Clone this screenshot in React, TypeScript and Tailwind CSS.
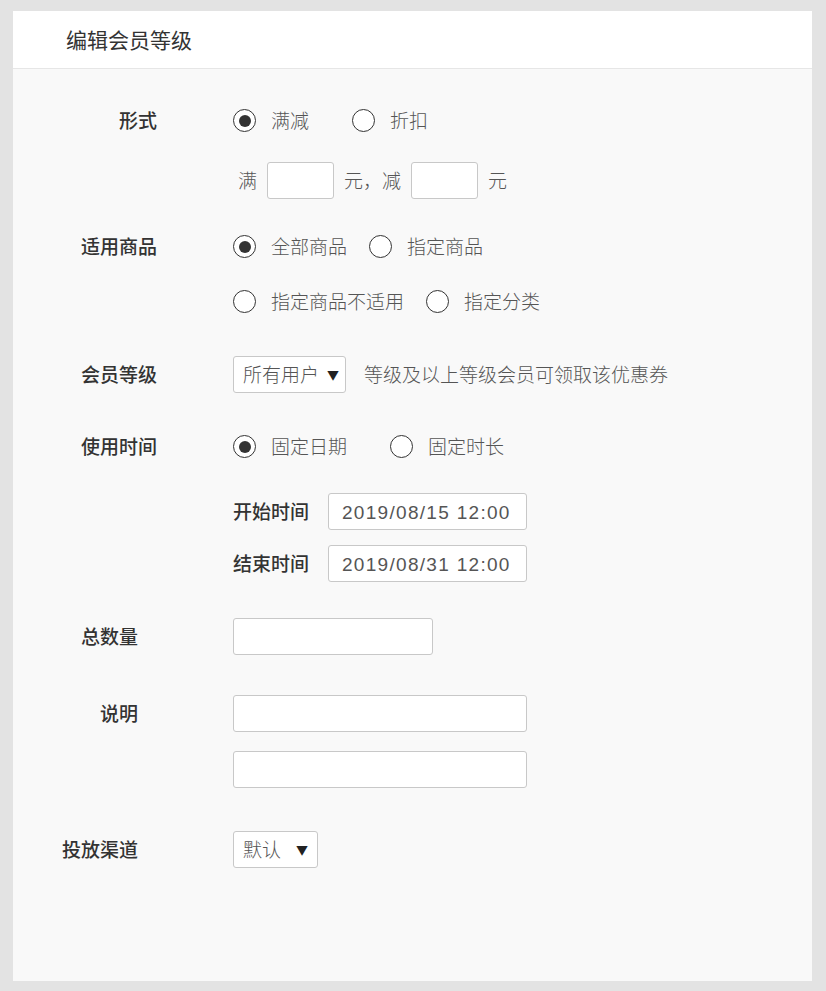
const font = { fontFamily: '"Noto Sans CJK SC", "Noto Sans", sans-serif' };

function Radio({ checked, label, className = "" }: { checked?: boolean; label: string; className?: string }) {
  return (
    <div className={`flex items-center ${className}`}>
      <span className="flex h-[23px] w-[23px] items-center justify-center rounded-full border-[1.5px] border-[#333] bg-white">
        {checked && <span className="h-[12px] w-[12px] rounded-full bg-[#333]" />}
      </span>
      <span className="ml-[15px] whitespace-nowrap text-[19px] font-light text-[#555]">{label}</span>
    </div>
  );
}

function Row({ label, wide, mt, children }: { label?: string; wide?: boolean; mt: string; children?: React.ReactNode }) {
  return (
    <div className={`flex h-[37px] items-center ${mt}`}>
      <div className={`w-[220px] shrink-0 text-right text-[19px] font-medium text-[#333] ${wide ? "pr-[76px]" : "pr-[95px]"}`}>
        {label}
      </div>
      {children}
    </div>
  );
}

const box = "rounded-[3px] border border-[#c8c8c8] bg-white";
const digits = { fontFamily: '"Liberation Sans", Arial, sans-serif' };

export default function App() {
  return (
    <div className="min-h-screen bg-[#e3e3e3] pb-[10px] pl-[13px] pr-[14px] pt-[11px]" style={font}>
      <div className="flex h-[970px] flex-col bg-[#f9f9f9]">
        <div className="flex h-[58px] items-center border-b border-[#e6e6e6] bg-white pl-[53px]">
          <h1 className="text-[21px] text-[#333]">编辑会员等级</h1>
        </div>

        <Row label="形式" wide mt="mt-[33px]">
          <Radio checked label="满减" />
          <Radio label="折扣" className="ml-[43px]" />
        </Row>

        <Row mt="mt-[23px]">
          <div className="flex items-center whitespace-nowrap text-[19px] font-light text-[#555]">
            <span className="ml-[5px]">满</span>
            <div className={`ml-[10px] h-[37px] w-[67px] ${box}`} />
            <span className="ml-[10px]">元，减</span>
            <div className={`ml-[10px] h-[37px] w-[67px] ${box}`} />
            <span className="ml-[10px]">元</span>
          </div>
        </Row>

        <Row label="适用商品" wide mt="mt-[29px]">
          <Radio checked label="全部商品" />
          <Radio label="指定商品" className="ml-[22px]" />
        </Row>

        <Row mt="mt-[18px]">
          <Radio label="指定商品不适用" />
          <Radio label="指定分类" className="ml-[22px]" />
        </Row>

        <Row label="会员等级" wide mt="mt-[36px]">
          <div className={`flex h-[37px] w-[113px] shrink-0 items-center whitespace-nowrap pl-[9px] text-[19px] font-light text-[#555] ${box}`}>
            所有用户
            <span className="ml-[8px] text-[12px] text-[#222]">▼</span>
          </div>
          <span className="ml-[18px] whitespace-nowrap text-[19px] font-light text-[#555]">等级及以上等级会员可领取该优惠券</span>
        </Row>

        <Row label="使用时间" wide mt="mt-[35px]">
          <Radio checked label="固定日期" />
          <Radio label="固定时长" className="ml-[43px]" />
        </Row>

        <Row mt="mt-[28px]">
          <span className="w-[95px] text-[19px] font-medium text-[#333]">开始时间</span>
          <div
            className={`flex h-[37px] w-[199px] items-center whitespace-nowrap pl-[13px] pt-[3px] text-[19px] tracking-[1.3px] text-[#555] ${box}`}
            style={digits}
          >
            2019/08/15 12:00
          </div>
        </Row>

        <Row mt="mt-[15px]">
          <span className="w-[95px] text-[19px] font-medium text-[#333]">结束时间</span>
          <div
            className={`flex h-[37px] w-[199px] items-center whitespace-nowrap pl-[13px] pt-[3px] text-[19px] tracking-[1.3px] text-[#555] ${box}`}
            style={digits}
          >
            2019/08/31 12:00
          </div>
        </Row>

        <Row label="总数量" mt="mt-[36px]">
          <div className={`h-[37px] w-[200px] ${box}`} />
        </Row>

        <Row label="说明" mt="mt-[40px]">
          <div className={`h-[37px] w-[294px] ${box}`} />
        </Row>

        <Row mt="mt-[19px]">
          <div className={`h-[37px] w-[294px] ${box}`} />
        </Row>

        <Row label="投放渠道" mt="mt-[43px]">
          <div className={`flex h-[37px] w-[85px] shrink-0 items-center whitespace-nowrap pl-[9px] text-[19px] font-light text-[#555] ${box}`}>
            默认
            <span className="ml-[15px] text-[12px] text-[#222]">▼</span>
          </div>
        </Row>
      </div>
    </div>
  );
}
